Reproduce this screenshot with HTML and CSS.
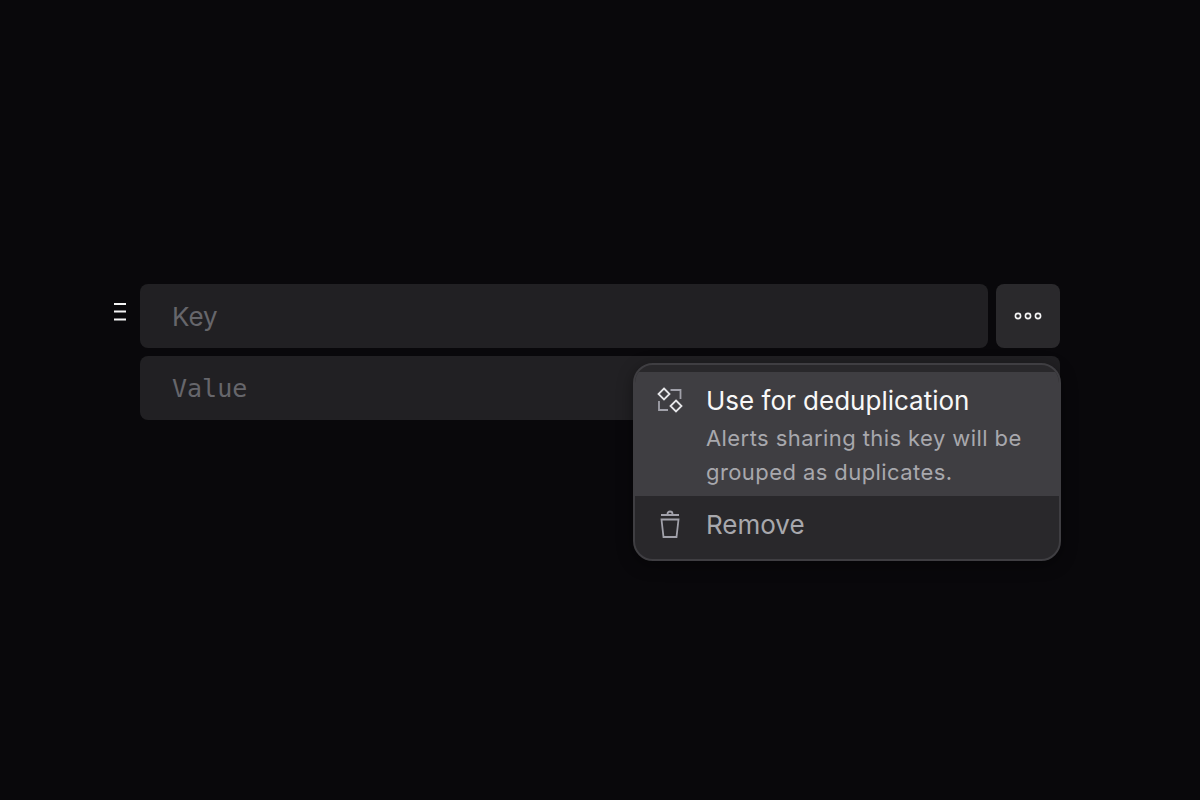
FILE: index.html
```html
<!DOCTYPE html>
<html>
<head>
    <title>Field row</title>
    <meta charset="UTF-8">
    <link rel="stylesheet" href="styles.css">
</head>
<body>
    <div class="field-editor">
        <div class="field-row">
            <div class="drag-handle">
                <svg width="12" height="20" viewBox="0 0 12 20" fill="none" stroke="#f4f4f5" stroke-width="2">
                    <path d="M0 2H12M0 9.6H12M0 17.5H12"/>
                </svg>
            </div>
            <div class="field-input key-input">Key</div>
            <button class="more-button">
                <svg width="28" height="10" viewBox="0 0 28 10" fill="none" stroke="#f4f4f5" stroke-width="1.6">
                    <circle cx="4" cy="5" r="2.6"/>
                    <circle cx="14" cy="5" r="2.6"/>
                    <circle cx="24" cy="5" r="2.6"/>
                </svg>
            </button>
        </div>
        <div class="field-input value-input">Value</div>

        <!-- Dropdown menu opened from the more button -->
        <div class="menu">
            <div class="menu-item active">
                <svg class="menu-icon" width="28" height="28" viewBox="0 0 28 28" fill="none" stroke="#e4e4e7" stroke-width="1.8">
                    <path d="M8 2.5L13.5 8L8 13.5L2.5 8Z"/>
                    <path d="M20 14.5L25.5 20L20 25.5L14.5 20Z"/>
                    <path d="M14.5 4H24.5V13" stroke="#a1a1aa"/>
                    <path d="M3 15V24H12" stroke="#a1a1aa"/>
                </svg>
                <div class="menu-text">
                    <div class="menu-title">Use for deduplication</div>
                    <div class="menu-desc">Alerts sharing this key will be grouped as duplicates.</div>
                </div>
            </div>
            <div class="menu-item">
                <svg class="menu-icon" width="28" height="28" viewBox="0 0 28 28" fill="none" stroke="#a1a1aa" stroke-width="1.8">
                    <path d="M5 5H23"/>
                    <path d="M11.5 5V4A2.5 2.5 0 0 1 16.5 4V5"/>
                    <path d="M5.5 9.5H22.5L20.5 27H7.5Z"/>
                </svg>
                <div class="menu-title">Remove</div>
            </div>
        </div>
    </div>
</body>
</html>
```

FILE: styles.css
```css
body, html {
    margin: 0;
    padding: 0;
    box-sizing: border-box;
}

*, *:before, *:after {
    box-sizing: inherit;
}

body {
    font-family: Inter, sans-serif;
    background-color: #09080b;
    min-height: 100vh;
    padding: 284px 140px 0 114px;
}

.field-editor {
    position: relative;
    display: flex;
    flex-direction: column;
    gap: 8px;
}

.field-row {
    display: flex;
    gap: 8px;
}

.drag-handle {
    width: 18px;
    padding-top: 18px;
    line-height: 0;
}

.field-input {
    height: 64px;
    padding: 0 32px;
    display: flex;
    align-items: center;
    background-color: #212023;
    border-radius: 8px;
    color: #66666b;
}

.key-input {
    flex: 1;
    font-size: 26px;
}

.value-input {
    margin-left: 26px;
    font-family: "DejaVu Sans Mono", monospace;
    font-size: 25px;
}

.more-button {
    width: 64px;
    height: 64px;
    padding: 0;
    border: none;
    border-radius: 8px;
    background-color: #2a292c;
    display: flex;
    align-items: center;
    justify-content: center;
}

.menu {
    position: absolute;
    top: 79px;
    right: -1px;
    width: 428px;
    height: 198px;
    padding-top: 7px;
    background-color: #29282b;
    border: 2px solid #3f3e42;
    border-radius: 20px;
    box-shadow: 0 4px 16px rgba(0, 0, 0, 0.4);
    overflow: hidden;
}

.menu-item {
    display: flex;
    gap: 22px;
    padding: 14px 21px 0;
    color: #a8a8ad;
}

.menu-item.active {
    height: 124px;
    background-color: #3f3e42;
    color: #f8f8f8;
}

.menu-icon {
    flex-shrink: 0;
}

.menu-title {
    font-size: 26px;
    line-height: 30px;
}

.menu-desc {
    margin-top: 5px;
    width: 330px;
    font-size: 22px;
    line-height: 34px;
    letter-spacing: 0.42px;
    color: #a8a8ad;
}
```
